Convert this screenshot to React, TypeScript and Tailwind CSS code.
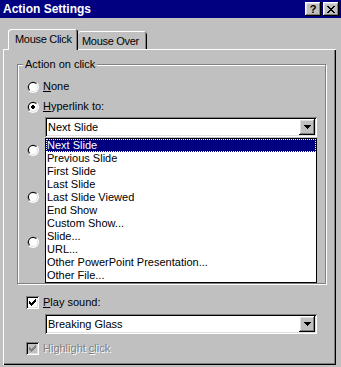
import React from "react";

const raised =
  "shadow-[inset_-1px_-1px_0_#000,inset_1px_1px_0_#fff,inset_-2px_-2px_0_#808080,inset_2px_2px_0_#dfdfdf]";
const sunken =
  "shadow-[inset_1px_1px_0_#808080,inset_-1px_-1px_0_#fff,inset_2px_2px_0_#000,inset_-2px_-2px_0_#dfdfdf]";

function Radio({ checked }: { checked?: boolean }) {
  return (
    <svg width="12" height="12" viewBox="0 0 12 12" className="shrink-0">
      <circle cx="6" cy="6" r="6" fill="#fff" />
      <path d="M10.24 1.76A6 6 0 0 0 1.76 10.24Z" fill="#808080" />
      <circle cx="6" cy="6" r="5" fill="#dfdfdf" />
      <path d="M9.54 2.46A5 5 0 0 0 2.46 9.54Z" fill="#000" />
      <circle cx="6" cy="6" r="4" fill="#fff" />
      {checked && <path d="M5 4h2v1h1v2H7v1H5V7H4V5h1z" fill="#000" />}
    </svg>
  );
}

function Check({ disabled }: { disabled?: boolean }) {
  return (
    <div
      className={`w-[13px] h-[13px] shrink-0 flex items-center justify-center ${sunken} ${
        disabled ? "bg-[#c0c0c0]" : "bg-white"
      }`}
    >
      <svg width="7" height="7" viewBox="0 0 7 7">
        <path
          d="M6 0h1v1H6zM5 1h2v1H5zM0 2h1v1H0zM4 2h3v1H4zM0 3h2v1H0zM3 3h3v1H3zM0 4h5v1H0zM1 5h3v1H1zM2 6h1v1H2z"
          fill={disabled ? "#808080" : "#000"}
        />
      </svg>
    </div>
  );
}

function Arrow() {
  return (
    <svg width="7" height="4" viewBox="0 0 7 4">
      <path d="M0 0h7v1H0zM1 1h5v1H1zM2 2h3v1H2zM3 3h1v1H3z" fill="#000" />
    </svg>
  );
}

function Combo({ value }: { value: string }) {
  return (
    <div className={`w-[272px] h-[20px] bg-white flex items-center p-[2px] ${sunken}`}>
      <span className="flex-1 pl-[1px]">{value}</span>
      <div className={`w-[16px] h-[16px] bg-[#c0c0c0] flex items-center justify-center ${raised}`}>
        <Arrow />
      </div>
    </div>
  );
}

const slides = [
  "Next Slide",
  "Previous Slide",
  "First Slide",
  "Last Slide",
  "Last Slide Viewed",
  "End Show",
  "Custom Show...",
  "Slide...",
  "URL...",
  "Other PowerPoint Presentation...",
  "Other File...",
];

export default function App() {
  return (
    <div className="w-[341px] h-[367px] bg-[#c0c0c0] overflow-hidden flex flex-col text-[11px] leading-[13px] text-black font-['Liberation_Sans',Arial,sans-serif]">
      {/* title bar */}
      <div className="h-[18px] shrink-0 bg-[#000080] flex items-center justify-between pl-[3px] pr-[2px]">
        <span className="text-white font-bold text-[12px] leading-[14px]">Action Settings</span>
        <div className="flex gap-[2px]">
          <div className={`w-[16px] h-[14px] bg-[#c0c0c0] flex items-center justify-center font-bold text-[11px] leading-[11px] ${raised}`}>
            ?
          </div>
          <div className={`w-[16px] h-[14px] bg-[#c0c0c0] flex items-center justify-center ${raised}`}>
            <svg width="8" height="7" viewBox="0 0 8 7">
              <path
                d="M0 0h2v1H0zM6 0h2v1H6zM1 1h2v1H1zM5 1h2v1H5zM2 2h4v1H2zM3 3h2v1H3zM2 4h4v1H2zM1 5h2v1H1zM5 5h2v1H5zM0 6h2v1H0zM6 6h2v1H6z"
                fill="#000"
              />
            </svg>
          </div>
        </div>
      </div>

      {/* tabs */}
      <div className="mt-[11px] h-[20px] shrink-0 flex items-end pl-[8px] tracking-[-0.3px]">
        <div className="relative z-10 w-[70px] h-[21px] mb-[-1px] bg-[#c0c0c0] rounded-t-[3px] pl-[7px] pt-[4px] shadow-[inset_1px_1px_0_#fff,inset_-1px_0_0_#000,inset_-2px_0_0_#808080]">
          Mouse Click
        </div>
        <div className="w-[69px] h-[18px] bg-[#c0c0c0] rounded-t-[3px] pl-[4px] pt-[4px] shadow-[inset_0_1px_0_#fff,inset_-1px_0_0_#000,inset_-2px_0_0_#808080]">
          Mouse Over
        </div>
      </div>

      {/* tab page */}
      <div className="ml-[3px] w-[333px] h-[316px] shrink-0 pt-[15px] pl-[14px] flex flex-col shadow-[inset_1px_1px_0_#fff,inset_-1px_-1px_0_#000,inset_-2px_-2px_0_#808080]">
        <div className="relative w-[309px] h-[220px] shrink-0 border border-[#808080] shadow-[inset_1px_1px_0_#fff,1px_1px_0_#fff]">
          <span className="absolute left-[5px] -top-[7px] px-[2px] bg-[#c0c0c0]">Action on click</span>
          <div className="flex flex-col pl-[9px] pt-[15px]">
            <div className="h-[13px] flex items-center gap-[4px]">
              <Radio />
              <span>
                <span className="underline">N</span>one
              </span>
            </div>
            <div className="mt-[7px] h-[13px] flex items-center gap-[4px]">
              <Radio checked />
              <span>
                <span className="underline">H</span>yperlink to:
              </span>
            </div>
            <div className="mt-[4px] ml-[18px] relative">
              <Combo value="Next Slide" />
              <div className="absolute z-10 left-0 top-[21px] w-[272px] h-[145px] bg-white border border-black">
                {slides.map((s, i) => (
                  <div
                    key={s}
                    className={
                      i === 0
                        ? "h-[13px] pl-[1px] bg-[#000080] text-white outline-1 outline-dotted outline-white -outline-offset-1"
                        : "h-[13px] pl-[1px]"
                    }
                  >
                    {s}
                  </div>
                ))}
              </div>
            </div>
            {/* options hidden under the open list */}
            <div className="mt-[6px] h-[13px] flex items-center">
              <Radio />
            </div>
            <div className={`mt-[4px] ml-[18px] w-[272px] h-[20px] bg-white ${sunken}`} />
            <div className="mt-[10px] h-[13px] flex items-center">
              <Radio />
            </div>
            <div className={`mt-[4px] ml-[18px] w-[272px] h-[20px] bg-white ${sunken}`} />
            <div className="mt-[8px] h-[13px] flex items-center">
              <Radio />
            </div>
            <div className={`mt-[4px] ml-[18px] w-[272px] h-[20px] bg-white ${sunken}`} />
          </div>
        </div>

        <div className="mt-[12px] ml-[9px] h-[13px] flex items-center gap-[4px]">
          <Check />
          <span>
            <span className="underline">P</span>lay sound:
          </span>
        </div>
        <div className="mt-[5px] ml-[28px]">
          <Combo value="Breaking Glass" />
        </div>
        <div className="mt-[8px] ml-[9px] h-[13px] flex items-center gap-[4px]">
          <Check disabled />
          <span className="text-[#808080] [text-shadow:1px_1px_0_#fff]">
            Highlight <span className="underline">c</span>lick
          </span>
        </div>
      </div>
    </div>
  );
}
